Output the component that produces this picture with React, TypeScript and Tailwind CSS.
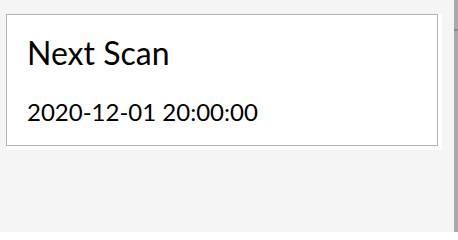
export default function App() {
    return (
        <div className="relative flex h-[232px] w-[458px] bg-[#f5f5f5] font-['Lato',sans-serif] text-black">
            <div className="flex-1 pl-[6px] pt-[14px]">
                <div className="w-[436px] bg-white pb-[4px] pr-[4px]">
                    <div className="h-[132px] border border-[#b4b4b4] px-[20px] pt-[18px]">
                        <h2 className="text-[32px] leading-[40px]">Next Scan</h2>
                        <p className="mt-[24px] text-[24px] leading-[30px]">2020-12-01 20:00:00</p>
                    </div>
                </div>
            </div>
            <div className="flex w-[4px] flex-col bg-[#a9a9a9]">
                <div className="h-[29px]" />
                <div className="h-[2px] bg-[#8c8c8c]" />
            </div>
        </div>
    );
}
